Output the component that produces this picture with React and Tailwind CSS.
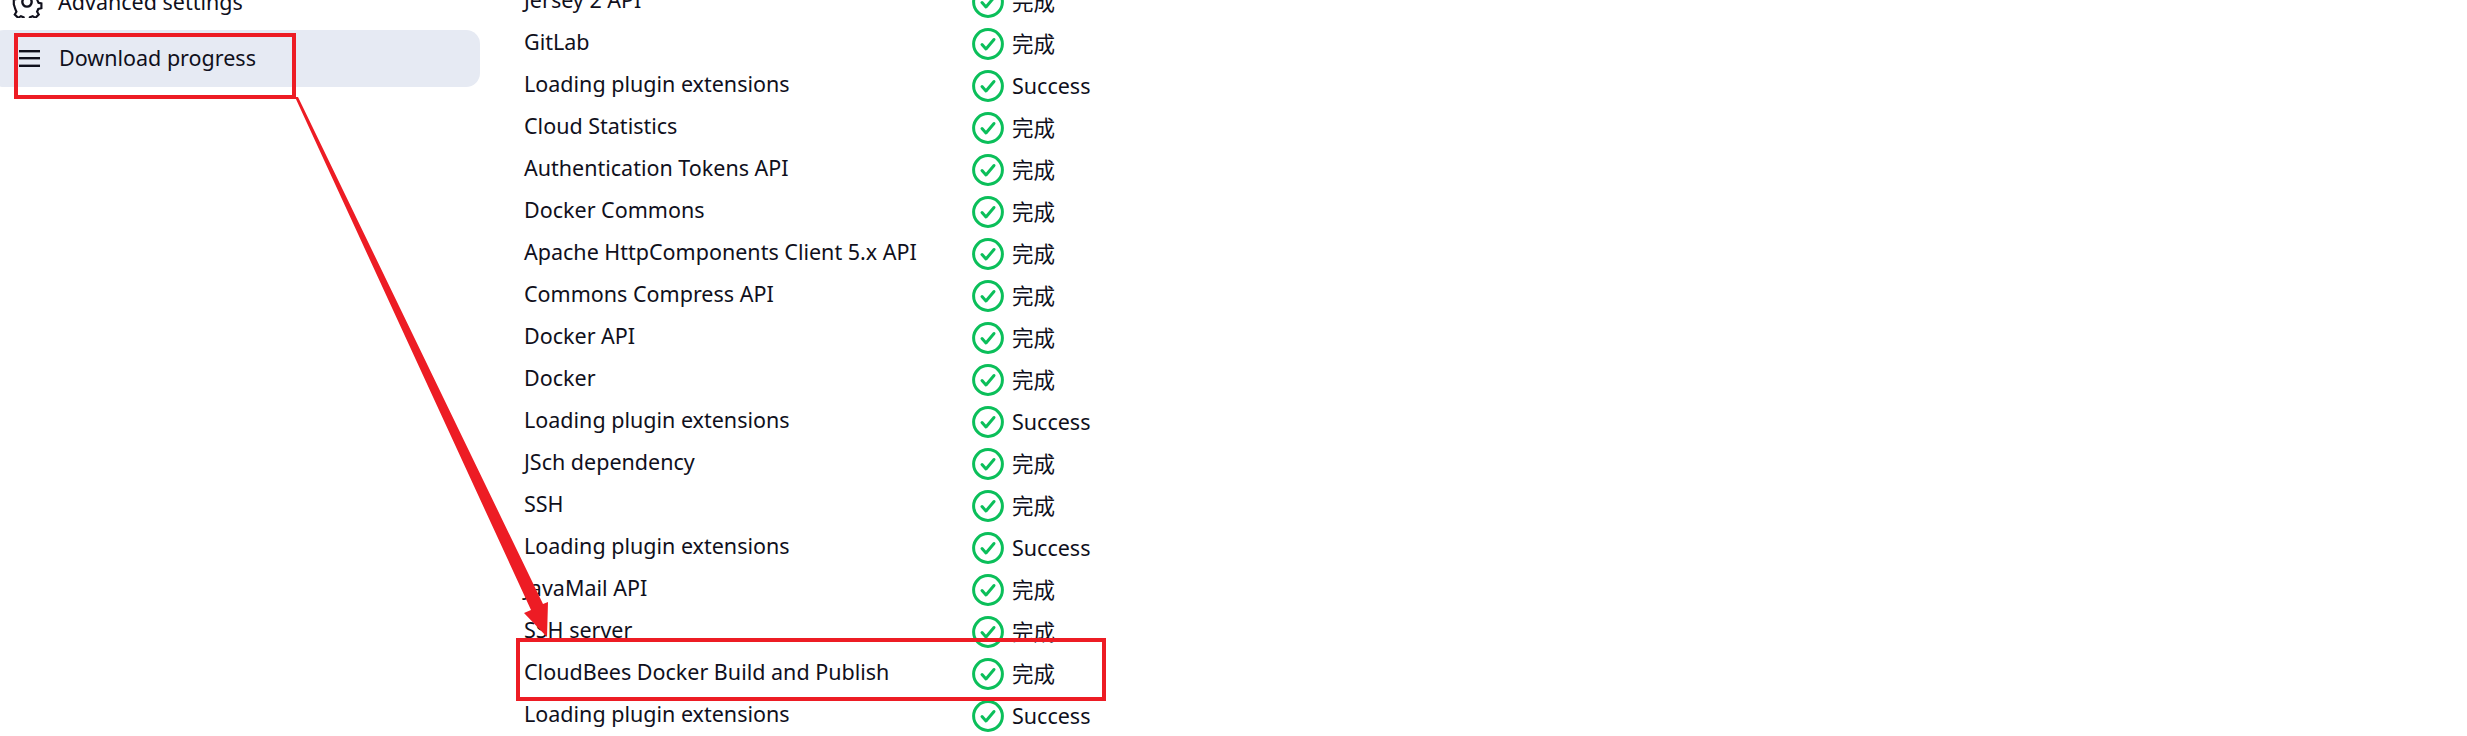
const rows = [
  ['Jersey 2 API', '完成'],
  ['GitLab', '完成'],
  ['Loading plugin extensions', 'Success'],
  ['Cloud Statistics', '完成'],
  ['Authentication Tokens API', '完成'],
  ['Docker Commons', '完成'],
  ['Apache HttpComponents Client 5.x API', '完成'],
  ['Commons Compress API', '完成'],
  ['Docker API', '完成'],
  ['Docker', '完成'],
  ['Loading plugin extensions', 'Success'],
  ['JSch dependency', '完成'],
  ['SSH', '完成'],
  ['Loading plugin extensions', 'Success'],
  ['JavaMail API', '完成'],
  ['SSH server', '完成'],
  ['CloudBees Docker Build and Publish', '完成'],
  ['Loading plugin extensions', 'Success'],
];

function CheckIcon() {
  return (
    <svg width="32" height="32" viewBox="0 0 32 32" fill="none" className="shrink-0">
      <circle cx="16" cy="16" r="14.4" stroke="#0bbf5a" strokeWidth="3" />
      <path d="M10 16.5l4 4.5 8-9.5" stroke="#0bbf5a" strokeWidth="3" strokeLinecap="round" strokeLinejoin="round" />
    </svg>
  );
}

function Row({ name, status }) {
  return (
    <div className="flex items-center h-[42px]">
      <div className="w-[448px] shrink-0">{name}</div>
      <div className="flex items-center gap-[8px] translate-y-[2px]">
        <CheckIcon />
        <span>{status}</span>
      </div>
    </div>
  );
}

export default function App() {
  return (
    <div className="relative h-[736px] w-[2467px] overflow-hidden bg-white text-[#10101c] text-[21.5px] font-['Noto_Sans','Noto_Sans_CJK_SC',sans-serif]">
      <div className="flex">
        {/* sidebar */}
        <div className="w-[524px] shrink-0 pr-[44px]">
          <div className="flex items-center h-[30px] -mt-[13px] pl-[11px] gap-[15px]">
            <svg width="32" height="32" viewBox="0 0 24 24" fill="none" stroke="#10101c" strokeWidth="1.8" className="shrink-0">
              <path d="M12 8.5a3.5 3.5 0 100 7 3.5 3.5 0 000-7z" />
              <path d="M10 3h4l.6 2.6 2.3 1 2.3-1.4 2.8 2.8-1.4 2.3 1 2.3 2.4.6v4l-2.6.6-1 2.3 1.4 2.3-2.8 2.8-2.3-1.4-2.3 1-.6 2.6h-4l-.6-2.6-2.3-1-2.3 1.4-2.8-2.8 1.4-2.3-1-2.3L1 14v-4l2.6-.6 1-2.3-1.4-2.3 2.8-2.8 2.3 1.4 2.3-1z" transform="translate(1.2 1.2) scale(.9)" />
            </svg>
            <span>Advanced settings</span>
          </div>
          <div className="flex items-center h-[57px] mt-[13px] -ml-[10px] pl-[29px] gap-[19px] rounded-[14px] bg-[#e6eaf3]">
            <svg width="21" height="17" viewBox="0 0 21 17" className="shrink-0" fill="#10101c">
              <rect y="0" width="21" height="2.4" />
              <rect y="7" width="21" height="2.4" />
              <rect y="14.6" width="21" height="2.4" />
            </svg>
            <span>Download progress</span>
          </div>
        </div>
        {/* plugin list */}
        <div className="-mt-[21px]">
          {rows.map((r, i) => (
            <Row key={i} name={r[0]} status={r[1]} />
          ))}
        </div>
      </div>

      {/* red annotations */}
      <div className="absolute left-[14px] top-[33px] w-[282px] h-[66px] border-[4px] border-[#ed1c24]" />
      <div className="absolute left-[516px] top-[638px] w-[590px] h-[63px] border-[4px] border-[#ed1c24]" />
      <svg className="absolute left-0 top-0" width="700" height="736" viewBox="0 0 700 736">
        <polygon points="295,97 298,97 543,604 548,602 547,637 524,613 531,610" fill="#ed1c24" />
      </svg>
    </div>
  );
}
